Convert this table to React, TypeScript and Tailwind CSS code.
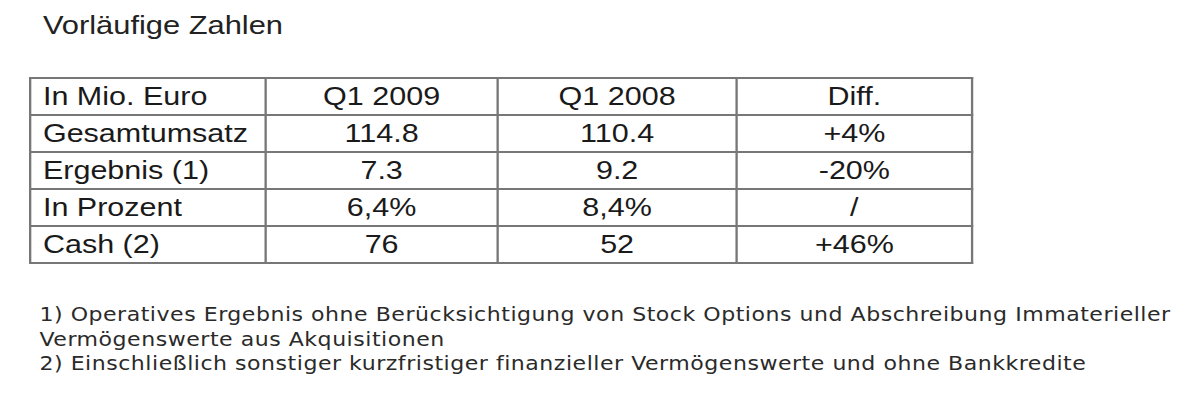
const rows = [
  { label: "In Mio. Euro", a: "Q1 2009", b: "Q1 2008", diff: "Diff." },
  { label: "Gesamtumsatz", a: "114.8", b: "110.4", diff: "+4%" },
  { label: "Ergebnis (1)", a: "7.3", b: "9.2", diff: "-20%" },
  { label: "In Prozent", a: "6,4%", b: "8,4%", diff: "/" },
  { label: "Cash (2)", a: "76", b: "52", diff: "+46%" },
];

const cell = "h-[37px] border-2 border-[#777777] p-0 align-middle leading-[29px]";

const App = () => {
  return (
    <div className="w-[1200px] h-[410px] overflow-hidden bg-white">
      {/* the source image is stretched sideways, so the whole sheet is too */}
      <div className="w-[1035px] origin-top-left scale-x-[1.16]">
        <h1 className="pt-[10px] pl-[37px] font-['Liberation_Sans',Arial,sans-serif] text-[26.6px] leading-[30px] text-[#222]">
          Vorläufige Zahlen
        </h1>
        <table className="mt-[37px] ml-[25px] w-[812px] table-fixed border-collapse font-['Liberation_Sans',Arial,sans-serif] text-[26.3px] text-[#1a1a1a]">
          <colgroup>
            <col className="w-[203px]" />
            <col className="w-[200px]" />
            <col className="w-[206px]" />
            <col className="w-[203px]" />
          </colgroup>
          <tbody>
            {rows.map((r) => (
              <tr key={r.label}>
                <td className={`${cell} pl-[10px] text-left`}>{r.label}</td>
                <td className={`${cell} text-center`}>{r.a}</td>
                <td className={`${cell} text-center`}>{r.b}</td>
                <td className={`${cell} text-center`}>{r.diff}</td>
              </tr>
            ))}
          </tbody>
        </table>
        <div className="mt-[38px] pl-[34px] font-['DejaVu_Sans',Verdana,sans-serif] text-[19px] tracking-[0.45px] leading-[24.5px] text-[#2a2a2a]">
          <p>
            1) Operatives Ergebnis ohne Berücksichtigung von Stock Options und Abschreibung Immaterieller
          </p>
          <p>Vermögenswerte aus Akquisitionen</p>
          <p>2) Einschließlich sonstiger kurzfristiger finanzieller Vermögenswerte und ohne Bankkredite</p>
        </div>
      </div>
    </div>
  );
};

export default App;
